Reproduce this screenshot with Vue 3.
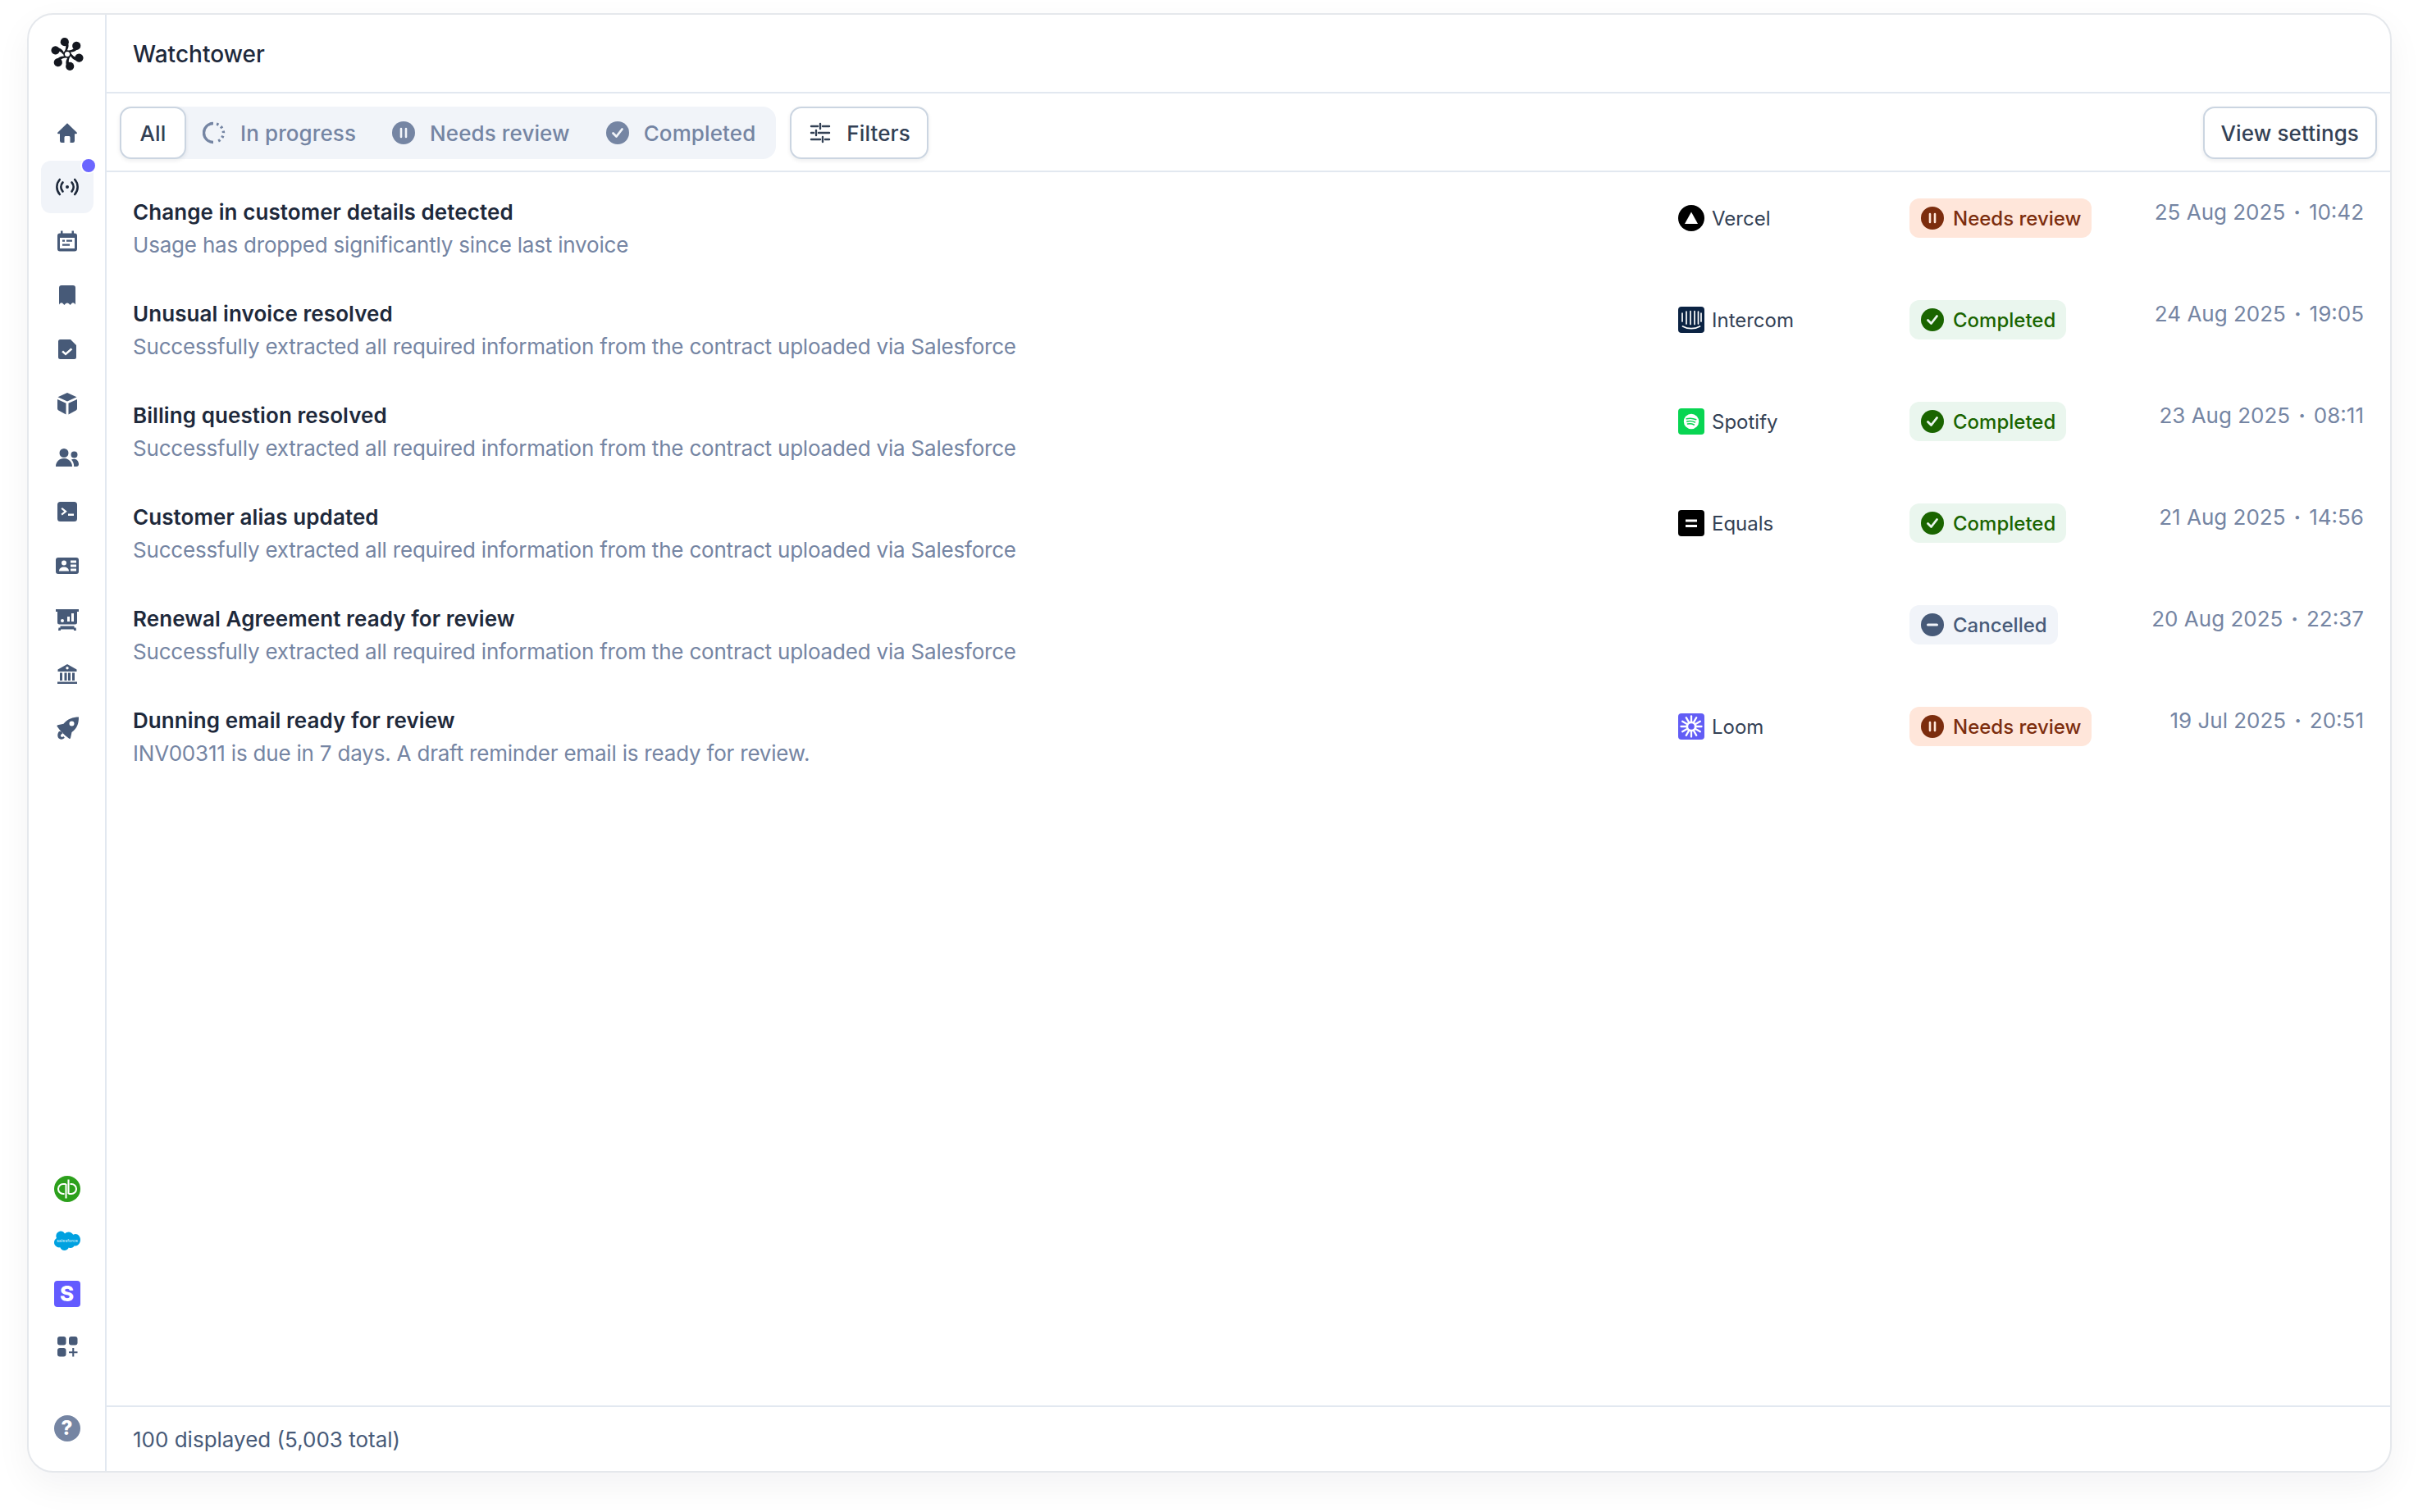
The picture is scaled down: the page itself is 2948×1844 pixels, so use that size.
<script setup>
const navIcons = [
  { p: 'M16 4.200 27.600 15.400c.7.700.3 1.800-.7 1.800H25v8.600a2.200 2.200 0 0 1-2.200 2.200h-3.300v-6.300c0-.9-.7-1.600-1.600-1.600h-3.800c-.9 0-1.600.7-1.600 1.600V28H9.200A2.200 2.200 0 0 1 7 25.800v-8.600H5.100c-1 0-1.400-1.100-.7-1.800Z' },
  { active: true },
  { p: 'M8 3.500h2.500v3h11v-3H24v3h1a3 3 0 0 1 3 3v16a3 3 0 0 1-3 3H7a3 3 0 0 1-3-3v-16a3 3 0 0 1 3-3h1ZM7 12v13h18V12Zm3 2.500h3v2.200h-3Zm5 0h7v2.200h-7Zm-5 5h9v2.200h-9Z' },
  { p: 'M9 4h14a3 3 0 0 1 3 3v20.500c-1.700-2.500-3.500-2.800-5-1L19.500 28c-1-1.200-2.200-2.500-3.500-2.500s-2.500 1.300-3.500 2.500L11 26.500c-1.500-1.800-3.300-1.500-5 1V7a3 3 0 0 1 3-3Z' },
  { p: 'M7.500 4H20l7 7v14.500a2.500 2.500 0 0 1-2.500 2.500h-17A2.500 2.500 0 0 1 5 25.500v-19A2.500 2.500 0 0 1 7.500 4Zm13 10.500-6.500 5.700-3-2.700-1.800 1.800 4.800 4.300 8.300-7.300Z' },
  { p: 'M16 3l11.500 5.200L16 13.500 4.500 8.200ZM4 11l10.500 4.800V29.500L5.300 24.500A2.500 2.500 0 0 1 4 22.300ZM28 11v11.300a2.500 2.500 0 0 1-1.300 2.200L17.500 29.500V15.800Z' },
  { p: 'M12 5a5.500 5.500 0 1 1 0 11 5.500 5.500 0 0 1 0-11ZM2 27c0-6 4.500-10 10-10 4 0 7.300 2 9 5.500.7 1.400 1 2.900 1 4.500ZM24.500 8.500a4 4 0 1 1 0 8 4 4 0 0 1 0-8ZM24.200 27c0-3.500-1.100-6.300-3.200-8.400 1-.6 2.300-.9 3.500-.9 3.200 0 5.500 3 5.500 6.300 0 1.700-1 3-2.800 3Z' },
  { p: 'M7.500 4h17A3.500 3.500 0 0 1 28 7.500v17a3.500 3.500 0 0 1-3.500 3.500h-17A3.500 3.500 0 0 1 4 24.500v-17A3.500 3.500 0 0 1 7.500 4Zm2.300 7L8.500 12.800l3.800 3-3.800 3 1.300 1.800 6-4.800Zm7.200 7.500V21h7v-2.500Z' },
  { p: 'M5 6h22a3 3 0 0 1 3 3v14a3 3 0 0 1-3 3H5a3 3 0 0 1-3-3V9a3 3 0 0 1 3-3Zm7 3.500a3 3 0 1 0 0 6 3 3 0 0 0 0-6ZM6 22.500h12c0-3-2.500-5-6-5s-6 2-6 5ZM20 9.500v3h7v-3Zm0 5v3h7v-3Zm0 5v3h7v-3Z' },
  { p: 'M2 3h28v3h-2v13a2.500 2.500 0 0 1-2.500 2.500h-19A2.500 2.500 0 0 1 4 19V6H2Zm19 5v10h3V8Zm-5 4v6h3v-6Zm-6 3a2 2 0 1 0 0 4 2 2 0 0 0 0-4ZM7.500 23.500h17v2h2L27 29h-2.800l-.4-1.500H8.200L7.800 29H5l.5-3.500h2Z' },
  { p: 'M16 4l11.500 6.500V13h-23v-2.500Zm0 3a1.700 1.700 0 1 0 0 3.400A1.700 1.700 0 0 0 16 7ZM7 14.500h3V24H7Zm5.500 0h3V24h-3Zm4.500 0h3V24h-3Zm5 0h3V24h-3ZM4 25.500h24V28H4Z' },
  { p: 'M30 2.500c0 8-2 14-8.500 18.500L20 28c-.2.900-1 1.300-1.700.8L13.500 25 7 18.500l-3.300-4.500c-.5-.7-.1-1.500.8-1.700l7-1.600C16 5 23 2.500 30 2.500Zm-8.500 5a3 3 0 1 0 0 6 3 3 0 0 0 0-6ZM6 20c1.800-.2 3.300.3 4.800 1.700l-2 1.900c-1.100 1-1.100 2.400-.2 3 .8.600 1.800.4 2.700-.5l1.600 1.700c-2.100 2.200-5.500 2.500-7.200.8C3.800 26.600 3.800 22.600 6 20Z' }
]

const rows = [
  { title: 'Change in customer details detected', sub: 'Usage has dropped significantly since last invoice', vendor: 'Vercel', logo: 'vercel', status: 'review', date: '25 Aug 2025', time: '10:42' },
  { title: 'Unusual invoice resolved', sub: 'Successfully extracted all required information from the contract uploaded via Salesforce', vendor: 'Intercom', logo: 'intercom', status: 'done', date: '24 Aug 2025', time: '19:05' },
  { title: 'Billing question resolved', sub: 'Successfully extracted all required information from the contract uploaded via Salesforce', vendor: 'Spotify', logo: 'spotify', status: 'done', date: '23 Aug 2025', time: '08:11' },
  { title: 'Customer alias updated', sub: 'Successfully extracted all required information from the contract uploaded via Salesforce', vendor: 'Equals', logo: 'equals', status: 'done', date: '21 Aug 2025', time: '14:56' },
  { title: 'Renewal Agreement ready for review', sub: 'Successfully extracted all required information from the contract uploaded via Salesforce', vendor: '', logo: '', status: 'cancelled', date: '20 Aug 2025', time: '22:37' },
  { title: 'Dunning email ready for review', sub: 'INV00311 is due in 7 days. A draft reminder email is ready for review.', vendor: 'Loom', logo: 'loom', status: 'review', date: '19 Jul 2025', time: '20:51' }
]
const statusLabel = { review: 'Needs review', done: 'Completed', cancelled: 'Cancelled' }
const lobes = [0, 60, 120, 180, 240, 300]
const loomRays = [0, 30, 60, 90, 120, 150]
</script>

<template>
  <div class="page">
  <div class="card">
    <aside class="side">
      <svg class="logo" viewBox="0 0 40 40" width="40" height="40">
        <g v-for="a in lobes" :key="a" :transform="`rotate(${a} 20 20)`">
          <circle cx="16.800" cy="5.200" r="5.100" fill="#14171f" />
          <path d="M19 16.500C21.500 13 22.500 9.500 20.500 5.500L18 9.500C18.500 11.500 18 14 17 16Z" fill="#14171f" />
        </g>
        <circle cx="20" cy="20" r="4.800" fill="#14171f" />
        <circle cx="20" cy="20" r="3" fill="#fff" />
      </svg>
      <nav class="nav">
        <div v-for="(n, i) in navIcons" :key="i" class="nav-item" :class="{ active: n.active }">
          <svg v-if="n.p" viewBox="0 0 32 32" width="32" height="32"><path :d="n.p" fill="currentColor" fill-rule="evenodd" /></svg>
          <svg v-else viewBox="0 0 32 32" width="32" height="32" fill="none" stroke="#1e293b" stroke-width="2.600" stroke-linecap="round">
            <circle cx="16" cy="16" r="2" fill="#1e293b" stroke="none" />
            <path d="M10.500 10.500a8 8 0 0 0 0 11M21.500 10.500a8 8 0 0 1 0 11" />
            <path d="M6.800 7a13.500 13.500 0 0 0 0 18M25.200 7a13.500 13.500 0 0 1 0 18" />
          </svg>
          <span v-if="n.active" class="dot"></span>
        </div>
      </nav>
      <div class="apps">
        <svg viewBox="0 0 32 32" width="32" height="32">
          <circle cx="16" cy="16" r="16" fill="#2ca01c" />
          <path d="M14.500 10H11a6 6 0 0 0 0 12h1.500M14.500 10V27.500M17.500 22H21a6 6 0 0 0 0-12h-1.500M17.500 22V4.500" fill="none" stroke="#fff" stroke-width="2.100" />
        </svg>
        <svg viewBox="0 0 32 32" width="32" height="32">
          <path d="M13 6.500c1.200-1.300 2.900-2 4.700-2 2.400 0 4.400 1.300 5.500 3.200 1-.4 1.900-.6 3-.6C29.400 7.100 32 10.400 32 14s-2.600 7.500-5.800 7.500c-.5 0-1-.1-1.400-.2-.9 1.600-2.700 2.800-4.700 2.800-.8 0-1.600-.2-2.300-.6-.9 2.100-2.900 3.500-5.200 3.500-2.500 0-4.500-1.600-5.300-3.700-.4.100-.7.100-1.100.1C3 23.400 0 20.800 0 17.300c0-2.200 1.200-4.200 3-5.200-.4-.8-.6-1.700-.6-2.700C2.400 6 5.100 3.500 8.500 3.500c1.800 0 3.400.9 4.500 3Z" fill="#00a1e0" />
          <text x="16" y="17" font-size="5.300" text-anchor="middle" fill="#d5f0fb" class="sf-text">salesforce</text>
        </svg>
        <div class="stripe">S</div>
        <svg viewBox="0 0 32 32" width="32" height="32" fill="#475a78">
          <rect x="4" y="4" width="10.500" height="10.500" rx="3" />
          <rect x="18" y="4" width="10.500" height="10.500" rx="3" />
          <rect x="4" y="18" width="10.500" height="10.500" rx="3" />
          <path d="M22.200 18h2.100v4.200h4.200v2.100h-4.200v4.200h-2.100v-4.200H18v-2.100h4.200Z" />
        </svg>
      </div>
      <div class="help">?</div>
    </aside>

    <main class="main">
      <header class="head">Watchtower</header>
      <div class="toolbar">
        <div class="seg">
          <button class="btn all">All</button>
          <span class="tab">
            <svg viewBox="0 0 28 28" width="28" height="28" fill="none" stroke="#7585a3" stroke-width="3.400">
              <path d="M13 2.500a11.500 11.500 0 0 0 0 23" />
              <path d="M17 3.200A11.500 11.500 0 0 1 25.500 14 11.500 11.500 0 0 1 17 24.800" stroke-dasharray="2.600 3.500" />
            </svg>
            In progress
          </span>
          <span class="tab">
            <svg viewBox="0 0 28 28" width="28" height="28"><circle cx="14" cy="14" r="14" fill="#7585a3" /><path d="M11 9v10M17 9v10" stroke="#f1f4f9" stroke-width="2.600" stroke-linecap="round" /></svg>
            Needs review
          </span>
          <span class="tab">
            <svg viewBox="0 0 28 28" width="28" height="28"><circle cx="14" cy="14" r="14" fill="#7585a3" /><path d="m8.500 14.500 4 4 7-9" fill="none" stroke="#f1f4f9" stroke-width="2.800" stroke-linecap="round" stroke-linejoin="round" /></svg>
            Completed
          </span>
        </div>
        <button class="btn filters">
          <svg viewBox="0 0 28 28" width="28" height="28" fill="none" stroke="#334155" stroke-width="2.400" stroke-linecap="round">
            <path d="M3 6h8M17 6h8M14 3v6M3 14h3M12 14h13M9 11v6M3 22h11M20 22h5M17 19v6" />
          </svg>
          Filters
        </button>
        <button class="btn view">View settings</button>
      </div>

      <div class="list">
        <div v-for="r in rows" :key="r.title" class="row">
          <div class="text">
            <div class="title">{{ r.title }}</div>
            <div class="sub">{{ r.sub }}</div>
          </div>
          <div class="vendor">
            <template v-if="r.logo">
              <svg viewBox="0 0 32 32" width="32" height="32">
                <g v-if="r.logo === 'vercel'">
                  <circle cx="16" cy="16" r="16" fill="#000" />
                  <path d="M16 8.500 24 23H8Z" fill="#fff" />
                </g>
                <g v-else-if="r.logo === 'intercom'">
                  <rect width="32" height="32" rx="4" fill="#0b2343" />
                  <path d="M5 8v10M10 6v15M15 5.500v16M20 5.500v16M24.500 6v15M28 8v10" stroke="#fff" stroke-width="1.700" stroke-linecap="round" fill="none" />
                  <path d="M5.500 24c6 3.600 15 3.600 21 0" stroke="#fff" stroke-width="1.800" stroke-linecap="round" fill="none" />
                </g>
                <g v-else-if="r.logo === 'spotify'">
                  <rect width="32" height="32" rx="4" fill="#08d552" />
                  <circle cx="16" cy="16" r="9.200" fill="#fff" />
                  <path d="M10.200 12.800c3.800-1 8-.7 11.600 1M10.800 16c3.200-.8 6.800-.5 9.700 1M11.500 19c2.600-.6 5.400-.4 7.800 1" stroke="#08d552" stroke-width="1.500" stroke-linecap="round" fill="none" />
                </g>
                <g v-else-if="r.logo === 'equals'">
                  <rect width="32" height="32" rx="4" fill="#000" />
                  <path d="M9 11.500h14v3H9ZM9 18h14v3H9Z" fill="#fff" />
                </g>
                <g v-else>
                  <rect width="32" height="32" rx="4" fill="#625df5" />
                  <g v-for="a in loomRays" :key="a" :transform="`rotate(${a} 16 16)`">
                    <path d="M16 3.500v25" stroke="#fff" stroke-width="2.300" stroke-linecap="round" />
                  </g>
                  <circle cx="16" cy="16" r="6.500" fill="#fff" />
                  <circle cx="16" cy="16" r="3.800" fill="#625df5" />
                </g>
              </svg>
              <span>{{ r.vendor }}</span>
            </template>
          </div>
          <div class="status-col">
            <span class="badge" :class="r.status">
              <svg viewBox="0 0 28 28" width="28" height="28">
                <circle cx="14" cy="14" r="14" fill="currentColor" />
                <path v-if="r.status === 'review'" d="M11 9v10M17 9v10" stroke="#ffe6da" stroke-width="2.600" stroke-linecap="round" />
                <path v-else-if="r.status === 'done'" d="m8.500 14.500 4 4 7-9" fill="none" stroke="#eaf6ee" stroke-width="2.800" stroke-linecap="round" stroke-linejoin="round" />
                <path v-else d="M8.500 14h11" stroke="#f1f4f9" stroke-width="3" stroke-linecap="round" />
              </svg>
              {{ statusLabel[r.status] }}
            </span>
          </div>
          <div class="date">{{ r.date }}<span class="sep">·</span>{{ r.time }}</div>
        </div>
      </div>

      <footer class="foot">100 displayed (5,003 total)</footer>
    </main>
  </div>
  </div>
</template>

<style>
html, body { margin: 0; background: #fff; }
</style>

<style scoped>
.page {
  box-sizing: border-box;
  height: 1844px;
  padding: 16px 0 0 33px;
  overflow: hidden;
}
.card {
  box-sizing: border-box;
  display: flex;
  width: 2883px;
  height: 1780px;
  background: #fff;
  border: 2px solid #e5e8ec;
  border-radius: 32px;
  box-shadow: 0 16px 44px rgba(15, 23, 42, 0.05);
  font-family: Inter, "Noto Sans", sans-serif;
  font-optical-sizing: none;
  overflow: hidden;
}
.side {
  box-sizing: border-box;
  width: 95px;
  flex: none;
  border-right: 2px solid #e2e8f0;
  display: flex;
  flex-direction: column;
  align-items: center;
  padding-top: 28px;
}
.logo { display: block; flex: none; }
.nav {
  display: flex;
  flex-direction: column;
  gap: 2px;
  margin-top: 44px;
}
.nav-item {
  position: relative;
  width: 64px;
  height: 64px;
  border-radius: 12px;
  display: flex;
  align-items: center;
  justify-content: center;
  color: #475a78;
}
.nav-item.active { background: #f1f4f9; }
.dot {
  position: absolute;
  top: -2px;
  right: -2px;
  width: 16px;
  height: 16px;
  background: #6b66ff;
  border-radius: 50%;
  box-shadow: 0 0 0 2px #fff;
}
.apps {
  margin-top: auto;
  display: flex;
  flex-direction: column;
  align-items: center;
  gap: 32px;
}
.apps svg { display: block; }
.sf-text { font-family: Inter, sans-serif; }
.stripe {
  width: 32px;
  height: 32px;
  border-radius: 4px;
  background: #635bff;
  color: #fff;
  font-size: 26px;
  font-weight: 800;
  line-height: 32px;
  text-align: center;
}
.help {
  width: 32px;
  height: 32px;
  border-radius: 50%;
  background: #7585a3;
  color: #fff;
  font-size: 24px;
  font-weight: 800;
  line-height: 32px;
  text-align: center;
  margin-top: 68px;
  margin-bottom: 36px;
}
.main {
  flex: 1;
  min-width: 0;
  display: flex;
  flex-direction: column;
}
.head {
  box-sizing: border-box;
  height: 96px;
  padding: 1px 32px 0;
  flex: none;
  display: flex;
  align-items: center;
  border-bottom: 2px solid #e2e8f0;
  font-size: 28px;
  font-weight: 500;
  letter-spacing: 0.05px;
  color: #1e293b;
}
.toolbar {
  box-sizing: border-box;
  height: 96px;
  flex: none;
  display: flex;
  align-items: center;
  padding: 2px 16px 0;
  border-bottom: 2px solid #e2e8f0;
}
.seg {
  display: flex;
  align-items: center;
  height: 64px;
  background: #f1f4f9;
  border-radius: 16px;
  padding-right: 25px;
  gap: 44px;
}
.btn {
  box-sizing: border-box;
  height: 64px;
  display: inline-flex;
  align-items: center;
  background: #fff;
  border: 2px solid #cbd5e1;
  border-radius: 14px;
  box-shadow: 0 2px 5px rgba(15, 23, 42, 0.08);
  font-family: inherit;
  font-optical-sizing: none;
  font-size: 26px;
  font-weight: 500;
  letter-spacing: 0.12px;
  color: #334155;
  padding: 0 20px;
}
.all { margin-right: -24px; width: 81px; justify-content: center; padding: 0; }
.filters { margin-left: 17px; gap: 18px; padding: 0 20px 0 21px; }
.view { margin-left: auto; }
.tab {
  display: inline-flex;
  align-items: center;
  gap: 18px;
  font-size: 26px;
  font-weight: 500;
  letter-spacing: 0.1px;
  color: #7585a3;
}
.list {
  flex: 1;
  padding-top: 7px;
}
.row {
  box-sizing: border-box;
  height: 124px;
  display: flex;
  padding: 22px 32px 0;
}
.text { flex: 1; min-width: 0; }
.title {
  font-size: 26px;
  line-height: 40px;
  font-weight: 600;
  letter-spacing: 0.08px;
  color: #1e293b;
}
.sub {
  font-size: 26px;
  line-height: 40px;
  letter-spacing: -0.2px;
  color: #7585a3;
}
.vendor {
  width: 282px;
  flex: none;
  height: 52px;
  margin-top: 1px;
  display: flex;
  align-items: center;
  gap: 9px;
  font-size: 24px;
  color: #334155;
}
.vendor svg { display: block; flex: none; }
.status-col {
  flex: none;
  width: 250px;
}
.badge {
  box-sizing: border-box;
  display: inline-flex;
  align-items: center;
  gap: 11px;
  height: 48px;
  margin-top: 3px;
  padding: 0 13px 0 14px;
  border-radius: 12px;
  font-size: 24px;
  font-weight: 500;
}
.badge svg { display: block; flex: none; }
.badge.review { background: #ffe6da; color: #7c2d0e; }
.badge.done { background: #eaf6ee; color: #1a6500; }
.badge.cancelled { background: #f1f4f9; color: #475a78; }
.date {
  flex: none;
  width: 304px;
  text-align: right;
  font-size: 26px;
  line-height: 40px;
  color: #7585a3;
  white-space: nowrap;
}
.sep { margin: 0 10px; font-weight: 700; }
.foot {
  box-sizing: border-box;
  height: 80px;
  flex: none;
  padding: 0 32px;
  display: flex;
  align-items: center;
  border-top: 2px solid #e2e8f0;
  font-size: 26px;
  color: #475a78;
}
</style>
